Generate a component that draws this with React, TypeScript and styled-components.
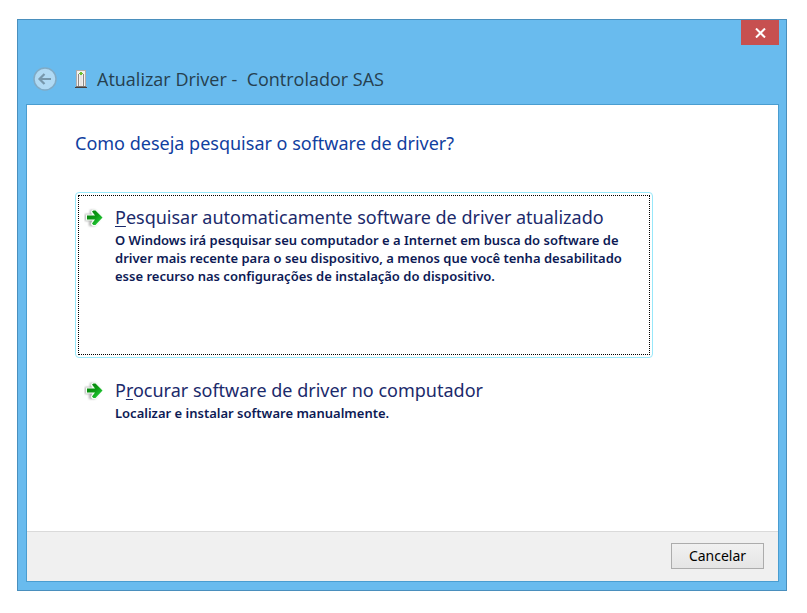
import React from "react";
import styled, { createGlobalStyle } from "styled-components";

const GlobalStyle = createGlobalStyle`
  *, *::before, *::after { box-sizing: border-box; }
  body {
    margin: 0;
    background: #ffffff;
    font-family: "Noto Sans", "Open Sans", sans-serif;
  }
  h1, h2, p { margin: 0; font-weight: 400; }
  button { font-family: inherit; cursor: pointer; }
`;

const Desktop = styled.div`
  display: flex;
  min-height: 100vh;
  padding: 19px 20px 22px 17px;
`;

const Dialog = styled.section`
  flex: 1;
  min-width: 0;
  display: flex;
  flex-direction: column;
  padding: 0 7px 8px 8px;
  border: 1px solid #4a8fbd;
  background: #69bbee;
`;

const CaptionBar = styled.div`
  display: flex;
  justify-content: flex-end;
  height: 26px;
`;

const CloseButton = styled.button`
  display: flex;
  align-items: center;
  justify-content: center;
  width: 38px;
  height: 25px;
  padding: 0;
  border: 0;
  background: #c75050;
`;

const TitleRow = styled.header`
  display: flex;
  align-items: center;
  height: 58px;
  padding: 8px 0 0 7px;
`;

const BackButton = styled.button`
  display: flex;
  width: 24px;
  height: 24px;
  padding: 0;
  border: 0;
  background: none;
`;

const DeviceIcon = styled.svg`
  flex: none;
  margin: 0 9px 0 17px;
`;

const Title = styled.h1`
  color: #26404f;
  font-family: "Open Sans", "Noto Sans", sans-serif;
  font-size: 18px;
  line-height: 24px;
  white-space: pre-wrap;
`;

const Panel = styled.div`
  flex: 1;
  display: flex;
  flex-direction: column;
  border: 1px solid #4a9dd0;
  background: #ffffff;
`;

const Content = styled.main`
  flex: 1;
  padding: 24px 48px;
`;

const Question = styled.h2`
  margin-bottom: 35px;
  color: #1040a0;
  font-size: 18px;
  line-height: 28px;
`;

const Options = styled.div`
  display: flex;
  flex-direction: column;
  gap: 7px;
  max-width: 578px;
`;

const OptionButton = styled.button<{ $focused?: boolean }>`
  display: flex;
  align-items: flex-start;
  width: 100%;
  min-height: ${(p) => (p.$focused ? 166 : 72)}px;
  padding: 2px;
  border: 1px solid ${(p) => (p.$focused ? "#98e8fa" : "transparent")};
  border-radius: 4px;
  background: none;
  text-align: left;
`;

const FocusFrame = styled.span<{ $focused?: boolean }>`
  flex: 1;
  align-self: stretch;
  display: flex;
  gap: 10px;
  padding: 7px 8px 8px 5px;
  border: 1px dotted ${(p) => (p.$focused ? "#000000" : "transparent")};
`;

const ArrowIcon = styled.svg`
  flex: none;
  margin-top: 5px;
`;

const OptionText = styled.span`
  display: flex;
  flex-direction: column;
  min-width: 0;
`;

const OptionTitle = styled.span`
  color: #1b2a6b;
  font-size: 18px;
  line-height: 28px;
`;

const AccessKey = styled.u`
  text-decoration-thickness: 1px;
  text-underline-offset: 2px;
`;

const OptionNote = styled.span`
  color: #0d1a55;
  font-size: 13px;
  font-weight: 600;
  line-height: 18px;
`;

const Footer = styled.footer`
  display: flex;
  justify-content: flex-end;
  padding: 11px 14px 12px;
  border-top: 1px solid #dadada;
  background: #f0f0f0;
`;

const CancelButton = styled.button`
  min-width: 93px;
  height: 26px;
  padding: 0 12px;
  border: 1px solid #acacac;
  background: linear-gradient(#f1f1f1, #e5e5e5);
  color: #000000;
  font-size: 14px;
  line-height: 20px;
`;

function GreenArrow() {
  return (
    <ArrowIcon width="21" height="20" viewBox="0 0 21 20" aria-hidden="true">
      <defs>
        <linearGradient id="arrowFill" x1="0" y1="0" x2="1" y2="1">
          <stop offset="0" stopColor="#067a0c" />
          <stop offset="0.5" stopColor="#0c9c14" />
          <stop offset="1" stopColor="#2ee04a" />
        </linearGradient>
        <filter id="arrowShadow" x="-30%" y="-30%" width="160%" height="160%">
          <feGaussianBlur stdDeviation="1" />
        </filter>
      </defs>
      <path d="M1 6H6V2H11L17 9L11 18H5V13H1Z" fill="#8c8c8c" opacity="0.7" filter="url(#arrowShadow)" />
      <path
        d="M2 6.500H8L6.500 3.500L8.500 1.500H12L19.500 9.500L12 18H8.500L6.500 16L8.500 12.500H2Z"
        fill="#f4fff4"
      />
      <path
        d="M3 7.500H11L8 3.500L9.500 2.500H11.500L18.500 9.500L11.500 17H9.500L8 15.500L11 11.500H3Z"
        fill="url(#arrowFill)"
      />
    </ArrowIcon>
  );
}

type OptionProps = {
  before?: string;
  accessKey: string;
  after: string;
  note: string;
  focused?: boolean;
};

function Option({ before, accessKey, after, note, focused }: OptionProps) {
  return (
    <OptionButton type="button" $focused={focused}>
      <FocusFrame $focused={focused}>
        <GreenArrow />
        <OptionText>
          <OptionTitle>
            {before}
            <AccessKey>{accessKey}</AccessKey>
            {after}
          </OptionTitle>
          <OptionNote>{note}</OptionNote>
        </OptionText>
      </FocusFrame>
    </OptionButton>
  );
}

export default function App() {
  return (
    <>
      <GlobalStyle />
      <Desktop>
        <Dialog role="dialog" aria-labelledby="dialog-title">
          <CaptionBar>
            <CloseButton type="button" aria-label="Fechar">
              <svg width="11" height="10" viewBox="0 0 11 10" aria-hidden="true">
                <path d="M1 0.500L10 9.500M10 0.500L1 9.500" stroke="#ffffff" strokeWidth="2" fill="none" />
              </svg>
            </CloseButton>
          </CaptionBar>
          <TitleRow>
            <BackButton type="button" aria-label="Voltar">
              <svg width="24" height="24" viewBox="0 0 24 24" aria-hidden="true">
                <circle cx="12" cy="12" r="11" fill="#b0daf4" stroke="#80abc6" strokeWidth="1.500" />
                <path d="M18 12H7M11.500 7L6.500 12L11.500 17" fill="none" stroke="#7798ac" strokeWidth="2.200" />
              </svg>
            </BackButton>
            <DeviceIcon width="14" height="20" viewBox="0 0 14 20" aria-hidden="true">
              <rect x="2.500" y="1.500" width="9" height="16" fill="#f3f1ef" stroke="#b3adaa" />
              <path d="M4.500 5V17M9.500 5V17" stroke="#8f8986" />
              <path d="M5 5V4H6V3H8V4H9V5H8V6H6V5Z" fill="#6fc02f" />
              <path d="M7 6V17" stroke="#d9d6d4" />
              <path d="M2 17.500H12" stroke="#7d7571" />
              <path d="M1 18.500H13" stroke="#493f3a" />
            </DeviceIcon>
            <Title id="dialog-title">{"Atualizar Driver -  Controlador SAS"}</Title>
          </TitleRow>
          <Panel>
            <Content>
              <Question>Como deseja pesquisar o software de driver?</Question>
              <Options>
                <Option
                  focused
                  accessKey="P"
                  after="esquisar automaticamente software de driver atualizado"
                  note="O Windows irá pesquisar seu computador e a Internet em busca do software de driver mais recente para o seu dispositivo, a menos que você tenha desabilitado esse recurso nas configurações de instalação do dispositivo."
                />
                <Option
                  before="P"
                  accessKey="r"
                  after="ocurar software de driver no computador"
                  note="Localizar e instalar software manualmente."
                />
              </Options>
            </Content>
            <Footer>
              <CancelButton type="button">Cancelar</CancelButton>
            </Footer>
          </Panel>
        </Dialog>
      </Desktop>
    </>
  );
}
